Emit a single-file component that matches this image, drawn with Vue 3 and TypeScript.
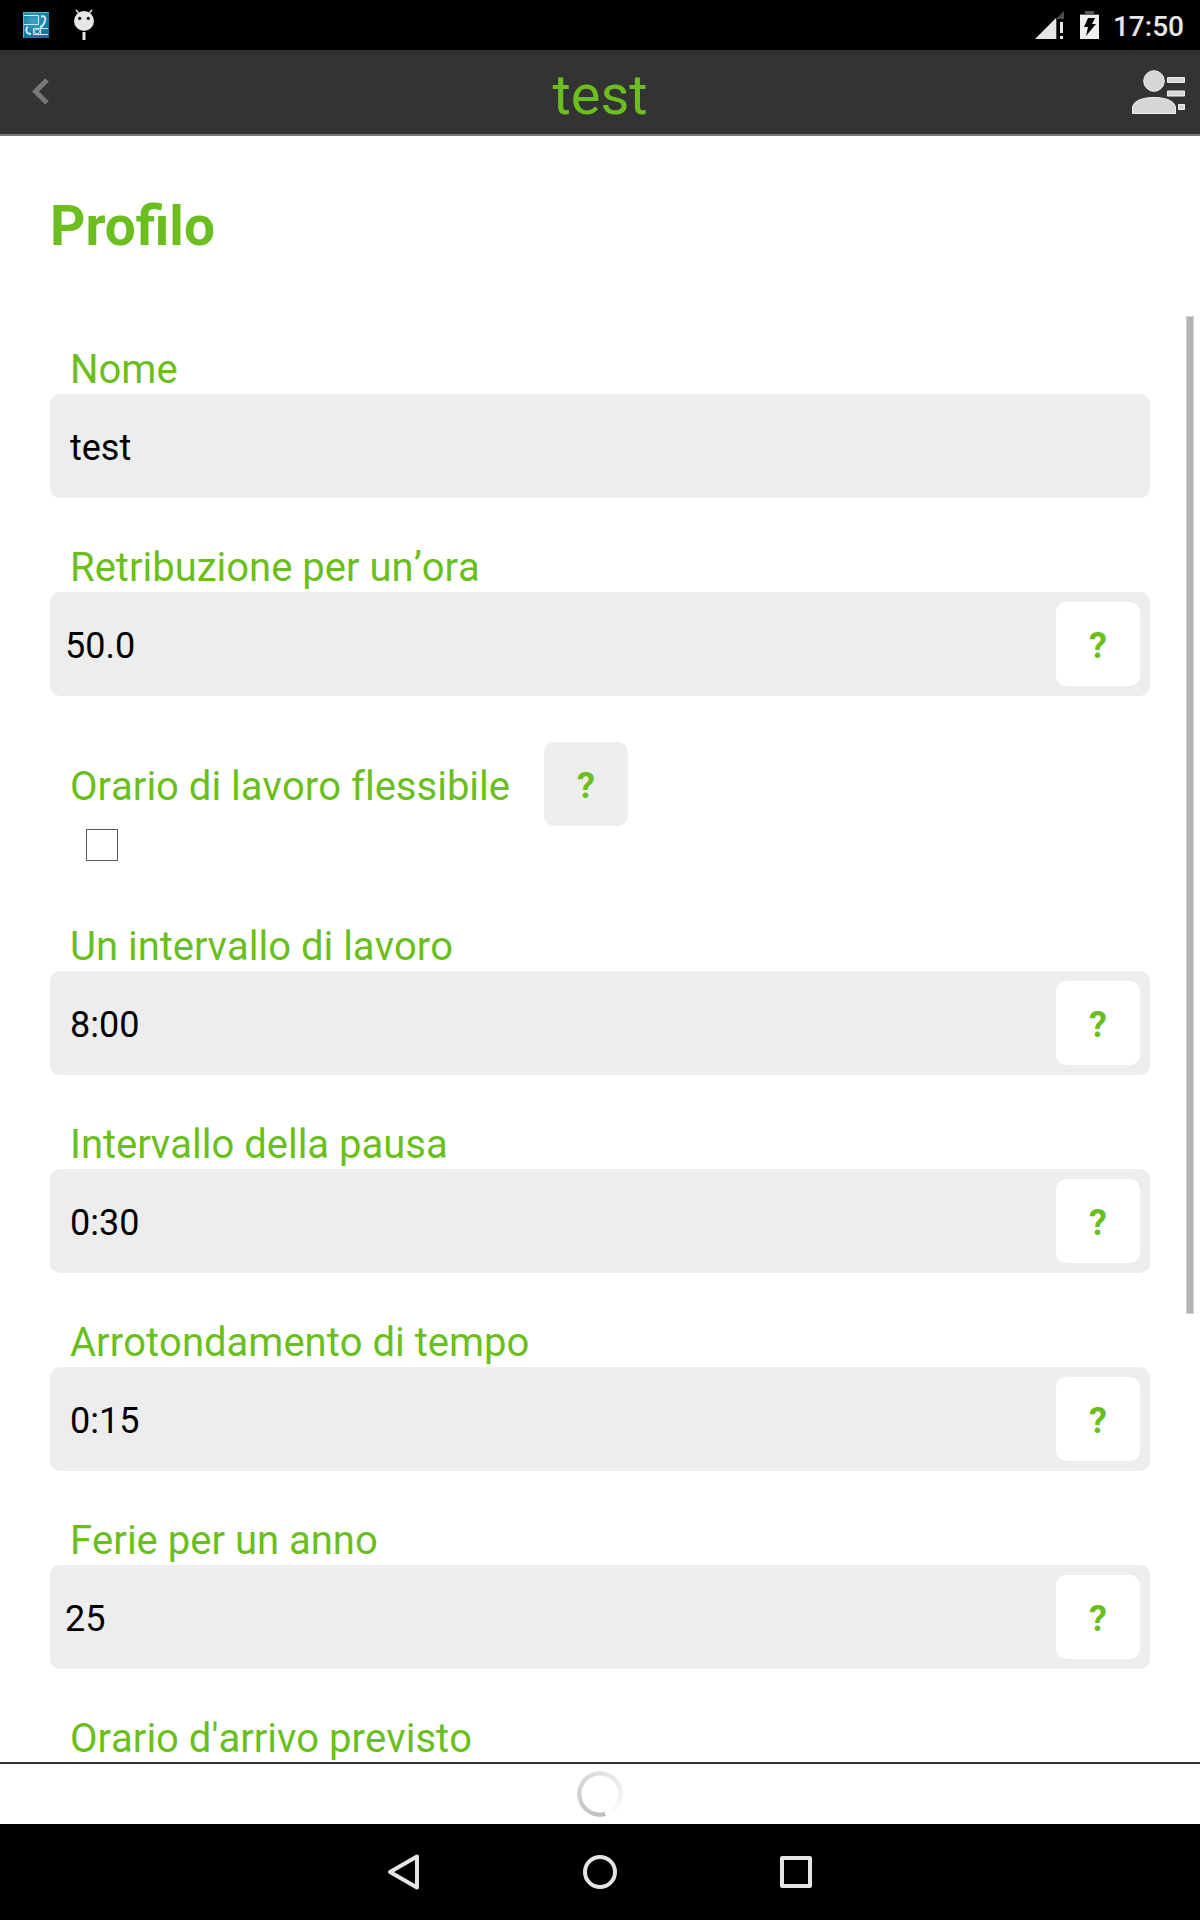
<script setup lang="ts">
import { reactive } from 'vue'

interface Field {
  id: string
  label: string
  kind: 'text' | 'number' | 'check'
  value: string
  help: boolean
}

const fields = reactive<Field[]>([
  { id: 'name', label: 'Nome', kind: 'text', value: 'test', help: false },
  { id: 'wage', label: 'Retribuzione per un’ora', kind: 'number', value: '50.0', help: true },
  { id: 'flexible', label: 'Orario di lavoro flessibile', kind: 'check', value: '', help: true },
  { id: 'work', label: 'Un intervallo di lavoro', kind: 'text', value: '8:00', help: true },
  { id: 'break', label: 'Intervallo della pausa', kind: 'text', value: '0:30', help: true },
  { id: 'rounding', label: 'Arrotondamento di tempo', kind: 'text', value: '0:15', help: true },
  { id: 'holidays', label: 'Ferie per un anno', kind: 'number', value: '25', help: true },
  { id: 'arrival', label: "Orario d'arrivo previsto", kind: 'text', value: '', help: false },
])
</script>

<template>
  <div class="screen">
    <div class="status">
      <svg class="app-icon" width="26" height="26" viewBox="0 0 26 26">
        <defs>
          <radialGradient id="blue" cx="0.4" cy="0.35" r="0.8">
            <stop offset="0" stop-color="#3fa3c4" />
            <stop offset="0.6" stop-color="#1480aa" />
            <stop offset="1" stop-color="#0d6f98" />
          </radialGradient>
        </defs>
        <rect width="26" height="26" fill="url(#blue)" />
        <path d="M0 .5h26M.5 0v26" stroke="#5ab4cf" fill="none" />
        <g fill="none" stroke="#cfe9f1">
          <path d="M1 3.5h14.500v9H1" />
          <path d="M18 4.500c4-1 5 1 4 4.500-.8 3-2 5-5 6.500" stroke-width="2" />
          <path d="M4.500 14.500c-2 3-2 7 3.500 7.500" stroke-width="2" />
          <path d="M25 16.500H10.500v6H25M17.500 16v7" />
          <circle cx="14" cy="19.500" r="2.500" />
        </g>
      </svg>
      <svg width="22" height="32" viewBox="0 0 22 32">
        <circle cx="11" cy="12" r="10" fill="#e6e6e6" />
        <path d="M3 .8 5.600 4M19 .8 16.400 4" stroke="#e6e6e6" stroke-width="1.500" />
        <path d="M11 23v8" stroke="#e6e6e6" stroke-width="3" />
        <circle cx="6.700" cy="9.300" r="1.600" />
        <circle cx="15.300" cy="9.300" r="1.600" />
      </svg>
      <svg class="signal" width="30" height="30" viewBox="0 0 30 30">
        <path d="M20 10 29 1v8h-7v20h-2z" fill="#4d4d4d" />
        <path d="M0 29 21 8v21z" fill="#e6e6e6" />
        <path d="M26.500 12v11M26.500 26v3" stroke="#e6e6e6" stroke-width="3" />
      </svg>
      <svg width="19" height="30" viewBox="0 0 19 30">
        <path d="M5 1h9v3h5v2H0V4h5z" fill="#575757" />
        <path d="M0 5h19v24H0z" fill="#eee" />
        <path d="M8 8h7l-3 6h4L6 26l2-9H4z" fill="#000" />
      </svg>
      <span class="clock">17:50</span>
    </div>

    <header class="bar">
      <button class="bar-button" aria-label="Indietro">
        <svg width="19" height="28" viewBox="0 0 19 28">
          <path d="M16 2 4.500 13.500 16 25" fill="none" stroke="#777" stroke-width="5" />
        </svg>
      </button>
      <h1>test</h1>
      <button class="bar-button end" aria-label="Profili">
        <svg width="53" height="44" viewBox="0 0 53 44">
          <g fill="#d6d6d6" stroke="#eee">
            <circle cx="22" cy="11" r="10.300" />
            <path d="M.5 43.500V37C2 30 12 27.500 22 27.500S42 30 43.500 37v6.500z" />
            <path d="M35.500 7.500h17v5h-17zM35.500 21h17v5h-17zM46.500 34.500h6v5h-6z" />
          </g>
        </svg>
      </button>
    </header>

    <main class="content">
      <h2>Profilo</h2>
      <div class="viewport">
        <form class="form" @submit.prevent>
          <div v-for="f in fields" :key="f.id" class="field">
            <template v-if="f.kind === 'check'">
              <div class="check-head">
                <label :for="f.id">{{ f.label }}</label>
                <button type="button" class="help grey">?</button>
              </div>
              <input :id="f.id" type="checkbox" class="check" />
            </template>
            <template v-else>
              <label :for="f.id">{{ f.label }}</label>
              <div class="box" :class="f.kind">
                <input :id="f.id" v-model="f.value" type="text" />
                <button v-if="f.help" type="button" class="help">?</button>
              </div>
            </template>
          </div>
        </form>
        <div class="thumb"></div>
      </div>
    </main>

    <footer class="loading">
      <div class="spinner"></div>
    </footer>

    <nav class="system">
      <button aria-label="Indietro">
        <svg width="40" height="40" viewBox="0 0 40 40">
          <path d="M33 4.500v31L6 20z" />
        </svg>
      </button>
      <button aria-label="Home">
        <svg width="40" height="40" viewBox="0 0 40 40"><circle cx="20" cy="20" r="15" /></svg>
      </button>
      <button aria-label="Recenti">
        <svg width="40" height="40" viewBox="0 0 40 40">
          <rect x="6" y="6" width="28" height="28" />
        </svg>
      </button>
    </nav>
  </div>
</template>

<style>
body {
  margin: 0;
}
</style>

<style scoped>
* {
  box-sizing: border-box;
}
.screen {
  display: flex;
  flex-direction: column;
  height: 100vh;
  background: #fff;
  color: #6abf1f;
  font-family: Roboto, "Liberation Sans", sans-serif;
}
button {
  display: flex;
  align-items: center;
  justify-content: center;
  margin: 0;
  padding: 0;
  border: 0;
  background: none;
  font-family: inherit;
}
svg {
  display: block;
}
.status {
  display: flex;
  flex: none;
  align-items: center;
  height: 50px;
  padding: 0 16px 0 23px;
  background: #000;
}
.app-icon {
  margin-right: 24px;
}
.signal {
  margin-left: auto;
  margin-right: 15px;
}
.clock {
  margin-left: 14px;
  padding-top: 4px;
  color: #e6e6e6;
  font-size: 28px;
  font-weight: 500;
  line-height: 32px;
}
.bar {
  display: flex;
  flex: none;
  align-items: center;
  height: 86px;
  border-bottom: 2px solid #7a7777;
  background: linear-gradient(#2e2e2e, #333 8px);
}
.bar-button {
  width: 80px;
  height: 84px;
}
.bar-button.end {
  justify-content: flex-end;
  padding-right: 15px;
}
h1 {
  flex: 1;
  margin: 0;
  padding-top: 6px;
  font-size: 56px;
  font-weight: 400;
  line-height: 66px;
  text-align: center;
}
.content {
  display: flex;
  flex: 1;
  flex-direction: column;
  min-height: 0;
}
h2 {
  margin: 0;
  padding: 57px 50px;
  font-size: 55px;
  font-weight: 700;
  line-height: 66px;
}
.viewport {
  position: relative;
  flex: 1;
  min-height: 0;
}
.form {
  display: flex;
  flex-direction: column;
  gap: 46px;
  height: 100%;
  padding: 30px 50px;
  overflow-y: auto;
  scrollbar-width: none;
}
.thumb {
  position: absolute;
  top: 0;
  right: 6px;
  width: 8px;
  height: 69%;
  border: 1px solid #d0d0d0;
  background: #b2b2b2;
}
.field {
  flex: none;
}
label {
  display: block;
  padding-left: 20px;
  font-size: 40px;
  line-height: 48px;
  font-kerning: none;
  font-variant-ligatures: none;
}
.box {
  display: flex;
  align-items: center;
  height: 104px;
  padding: 0 10px 0 20px;
  border-radius: 10px;
  background: #ededed;
}
.box.number {
  padding-left: 15px;
}
.box input {
  flex: 1;
  min-width: 0;
  height: 100%;
  padding: 4px 0 0;
  border: 0;
  outline: 0;
  background: none;
  color: #000;
  font-family: inherit;
  font-size: 36px;
}
.help {
  width: 84px;
  height: 84px;
  padding-top: 4px;
  border-radius: 10px;
  background: #fff;
  color: #6abf1f;
  font-size: 36px;
  font-weight: 700;
}
.help.grey {
  background: #ededed;
}
.check-head {
  display: flex;
  gap: 34px;
  align-items: center;
}
.check-head label {
  padding-top: 6px;
}
.check {
  display: block;
  appearance: none;
  width: 32px;
  height: 32px;
  margin: 3px 36px 16px;
  border: 1px solid #5c5c5c;
  background: #fff;
}
.check:checked {
  background: #6abf1f;
}
.loading {
  display: flex;
  flex: none;
  align-items: center;
  justify-content: center;
  height: 62px;
  border-top: 2px solid #333;
}
.spinner {
  width: 46px;
  height: 46px;
  border-radius: 50%;
  background: conic-gradient(from 165deg, #bdbdbd, #fff);
  mask: radial-gradient(closest-side, transparent 18px, #000 19px);
}
.system {
  display: flex;
  flex: none;
  justify-content: center;
  height: 96px;
  background: #000;
}
.system button {
  width: 196px;
}
.system svg {
  fill: none;
  stroke: #e4e4e4;
  stroke-width: 4px;
  stroke-linejoin: round;
}
</style>
